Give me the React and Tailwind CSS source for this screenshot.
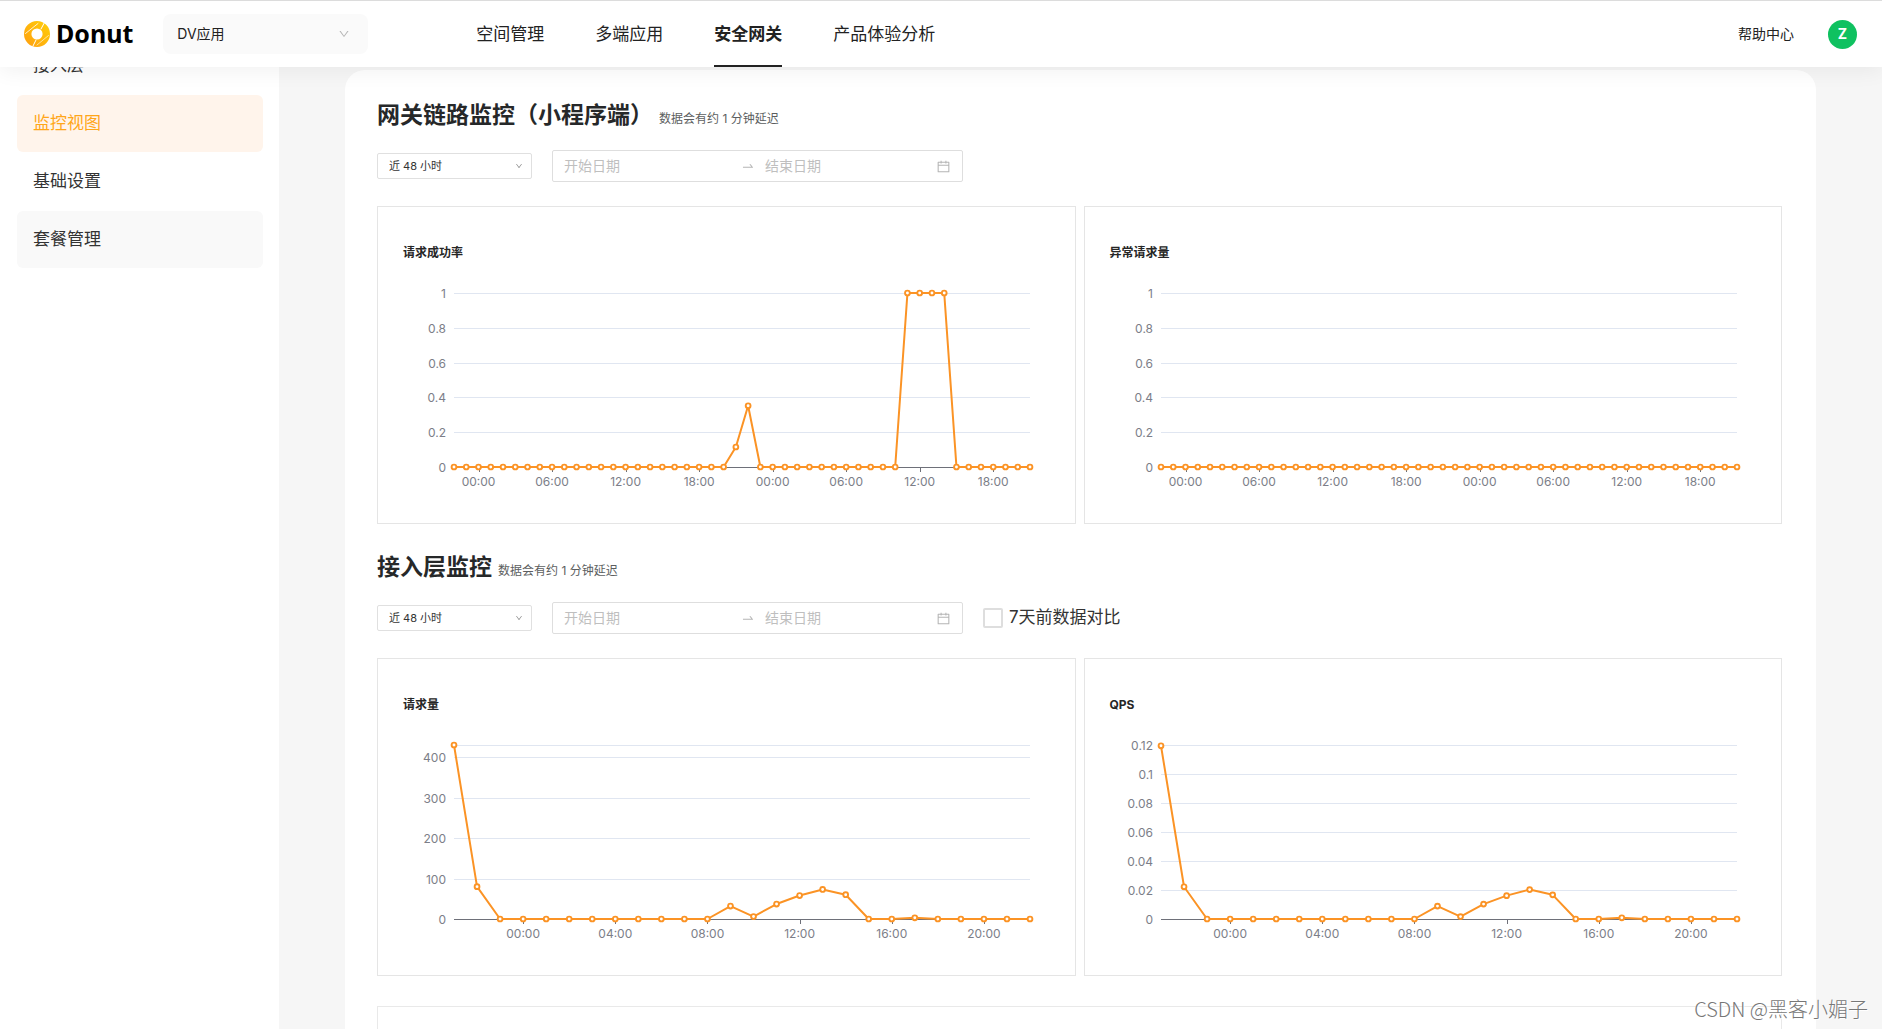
import { useLayoutEffect, useRef, useState } from 'react';
import { AiOutlineCalendar, AiOutlineDown, AiOutlineSwapRight } from 'react-icons/ai';

const NAV_ITEMS = ['空间管理', '多端应用', '安全网关', '产品体验分析'];
const SIDE_ITEMS = ['接入层', '监控视图', '基础设置', '套餐管理'];

const PLOT_TOP = 23;
const PLOT_HEIGHT = 174;
const PLOT_LEFT = 51;
const PLOT_RIGHT = 20;

// Hourly points over the last 48 hours
const successRate = Array(48).fill(0);
successRate[23] = 0.115;
successRate[24] = 0.352;
successRate.fill(1, 37, 41);

const errorCount = Array(48).fill(0);

const requests = [
  430, 80, 0, 0, 0, 0, 0, 0, 0, 0, 0, 0, 32, 6, 37, 58, 73, 60, 0, 0, 3, 0, 0, 0, 0, 0,
];
const qps = requests.map((n) => n / 3600);

const sixHourLabels = ['00:00', '06:00', '12:00', '18:00', '00:00', '06:00', '12:00', '18:00'].map(
  (text, i) => ({ text, index: 2 + i * 6 })
);
const fourHourLabels = ['00:00', '04:00', '08:00', '12:00', '16:00', '20:00'].map((text, i) => ({
  text,
  index: 3 + i * 4,
}));

function LineChart({ title, data, max, ticks, labels, topLine }) {
  const boxRef = useRef(null);
  const [width, setWidth] = useState(0);

  useLayoutEffect(() => {
    const update = () => setWidth(Math.round(boxRef.current.clientWidth));
    update();
    const observer = new ResizeObserver(update);
    observer.observe(boxRef.current);
    return () => observer.disconnect();
  }, []);

  const right = width - PLOT_RIGHT;
  const bottom = PLOT_TOP + PLOT_HEIGHT;
  const x = (i) => PLOT_LEFT + (i * (right - PLOT_LEFT)) / (data.length - 1);
  const y = (v) => bottom - (v / max) * PLOT_HEIGHT;
  const gridLines = topLine ? [...ticks, max] : ticks;

  return (
    <div className="min-w-0 flex-1 border border-[#e5e5e5] px-[25px] pt-9 pb-6">
      <h3 className="text-xs leading-5 font-bold text-[#262626]">{title}</h3>
      <div ref={boxRef} className="mt-[7px] h-[229px] w-full">
        {width > 0 && (
          <svg width={width} height="229" className="block" role="img" aria-label={title}>
            {gridLines.map((v) => (
              <line
                key={v}
                x1={PLOT_LEFT}
                x2={right}
                y1={Math.round(y(v)) + 0.5}
                y2={Math.round(y(v)) + 0.5}
                stroke={v === 0 ? '#6e7079' : '#e0e6f1'}
              />
            ))}
            {ticks.map((v) => (
              <text
                key={v}
                x={PLOT_LEFT - 8}
                y={Math.round(y(v)) + 5}
                textAnchor="end"
                className="fill-[#7c7e88] text-xs"
              >
                {v}
              </text>
            ))}
            {labels.map(({ text, index }) => (
              <g key={index}>
                <line
                  x1={Math.round(x(index)) + 0.5}
                  x2={Math.round(x(index)) + 0.5}
                  y1={bottom}
                  y2={bottom + 5}
                  stroke="#6e7079"
                />
                <text
                  x={x(index)}
                  y={bottom + 19}
                  textAnchor="middle"
                  className="fill-[#7c7e88] text-xs"
                >
                  {text}
                </text>
              </g>
            ))}
            <polyline
              points={data.map((v, i) => `${x(i)},${y(v)}`).join(' ')}
              fill="none"
              stroke="#fb9325"
              strokeWidth="2"
              strokeLinejoin="bevel"
            />
            {data.map((v, i) => (
              <circle
                key={i}
                cx={x(i)}
                cy={y(v)}
                r="2.4"
                fill="#fff"
                stroke="#fb9325"
                strokeWidth="1.9"
              />
            ))}
          </svg>
        )}
      </div>
    </div>
  );
}

function Filters({ children }) {
  return (
    <div className="mt-5 flex h-8 items-center">
      <div className="relative">
        <select
          aria-label="时间范围"
          className="block h-[26px] w-[155px] appearance-none rounded-xs border border-[#e0e0e0] bg-white pl-[11px] text-[11px] text-[#333]"
        >
          <option>近 48 小时</option>
        </select>
        <AiOutlineDown size={8} className="pointer-events-none absolute top-[9px] right-[9px] text-[#888]" />
      </div>
      <div className="ml-5 flex h-8 w-[411px] items-center rounded-xs border border-[#dedede] px-[11px] text-sm">
        <input
          aria-label="开始日期"
          placeholder="开始日期"
          className="w-[177px] placeholder:text-[#bfbfbf] focus:outline-none"
        />
        <AiOutlineSwapRight size={14} className="text-[#b5b5b5]" />
        <input
          aria-label="结束日期"
          placeholder="结束日期"
          className="ml-[10px] min-w-0 flex-1 placeholder:text-[#bfbfbf] focus:outline-none"
        />
        <AiOutlineCalendar size={15} className="text-[#b5b5b5]" />
      </div>
      {children}
    </div>
  );
}

function SectionTitle({ title }) {
  return (
    <div className="flex h-[30px] items-center gap-[6px]">
      <h2 className="text-[23px] leading-7 font-bold text-[#262829]">{title}</h2>
      <span className="pt-2 text-xs text-[#5c5e60]">数据会有约 1 分钟延迟</span>
    </div>
  );
}

function Logo() {
  return (
    <a href="#" className="flex items-center gap-[6px]">
      <svg width="26" height="26" viewBox="0 0 26 26">
        <defs>
          <linearGradient id="ring" x1="0" y1="1" x2="1" y2="0">
            <stop offset="0" stopColor="#ffa50f" />
            <stop offset="1" stopColor="#ffc90a" />
          </linearGradient>
        </defs>
        <circle cx="13" cy="13" r="9.3" fill="none" stroke="url(#ring)" strokeWidth="7.4" />
        <g stroke="#fff" strokeLinecap="round" fill="none">
          <path d="M1.5 12.5 14 2.5" strokeWidth="0.8" />
          <path d="M17 8 20.5 1.5" strokeWidth="1" />
          <path d="M9 25 12 19" strokeWidth="1" />
          <path d="M13 24 24.5 14.5" strokeWidth="0.6" />
        </g>
      </svg>
      <span className="font-['Noto_Sans','Noto_Sans_CJK_SC',sans-serif] text-[25px] font-bold text-black">Donut</span>
    </a>
  );
}

function Header() {
  return (
    <header className="relative z-10 flex h-[67px] shrink-0 items-center border-t border-[#dcdcdc] bg-white pr-[25px] pl-6 shadow-[0_4px_20px_rgba(0,0,0,0.06)]">
      <Logo />
      <div className="relative ml-[30px]">
        <select
          aria-label="应用"
          className="block h-10 w-[205px] appearance-none rounded-lg bg-[#fafafa] pl-[14px] text-sm text-[#222]"
        >
          <option>DV应用</option>
        </select>
        <AiOutlineDown size={12} className="pointer-events-none absolute top-[14px] right-[18px] text-[#b5b5b5]" />
      </div>
      <nav className="ml-[108px] flex h-full gap-[51px]">
        {NAV_ITEMS.map((item) => (
          <a
            key={item}
            href="#"
            className={`flex items-center border-b-2 pt-1 text-[17px] text-[#222] ${
              item === '安全网关' ? 'border-[#222] font-bold' : 'border-transparent'
            }`}
          >
            {item}
          </a>
        ))}
      </nav>
      <a href="#" className="ml-auto text-sm text-[#222]">
        帮助中心
      </a>
      <button className="ml-[34px] h-[29px] w-[29px] rounded-full bg-[#0fc160] text-sm font-bold text-white">
        Z
      </button>
    </header>
  );
}

function Sidebar() {
  const styles = {
    监控视图: 'bg-[#fff4eb] text-[#ffa61a]',
    套餐管理: 'bg-[#f9f9f9] text-[#333]',
  };
  return (
    <aside className="w-[279px] shrink-0 bg-white pr-4 pl-[17px]">
      <nav className="-mt-[30px] flex flex-col gap-px">
        {SIDE_ITEMS.map((item) => (
          <a
            key={item}
            href="#"
            className={`flex h-[57px] items-center rounded-md px-4 text-[17px] ${styles[item] || 'text-[#333]'}`}
          >
            {item}
          </a>
        ))}
      </nav>
    </aside>
  );
}

export default function App() {
  const rateTicks = [0, 0.2, 0.4, 0.6, 0.8, 1];

  return (
    <div className="relative flex h-screen flex-col overflow-hidden bg-[#f6f6f6] font-[Inter,'Noto_Sans_CJK_SC',sans-serif]">
      <Header />
      <div className="flex min-h-0 flex-1">
        <Sidebar />
        <main className="min-w-0 flex-1 px-[66px] pt-[3px]">
          <div className="rounded-t-[20px] bg-white pt-[30px] pr-[34px] pl-8">
            <section>
              <SectionTitle title="网关链路监控（小程序端）" />
              <Filters />
              <div className="mt-6 flex gap-2">
                <LineChart title="请求成功率" data={successRate} max={1} ticks={rateTicks} labels={sixHourLabels} />
                <LineChart title="异常请求量" data={errorCount} max={1} ticks={rateTicks} labels={sixHourLabels} />
              </div>
            </section>

            <section className="mt-7">
              <SectionTitle title="接入层监控" />
              <Filters>
                <label className="ml-5 flex items-center gap-[6px] text-[17px] text-[#333]">
                  <input
                    type="checkbox"
                    className="h-5 w-5 appearance-none rounded-xs border-2 border-[#dedede] bg-white"
                  />
                  7天前数据对比
                </label>
              </Filters>
              <div className="mt-6 flex gap-2">
                <LineChart
                  title="请求量"
                  data={requests}
                  max={430}
                  ticks={[0, 100, 200, 300, 400]}
                  labels={fourHourLabels}
                  topLine
                />
                <LineChart
                  title="QPS"
                  data={qps}
                  max={0.12}
                  ticks={[0, 0.02, 0.04, 0.06, 0.08, 0.1, 0.12]}
                  labels={fourHourLabels}
                />
              </div>
              <div className="mt-[30px] h-80 border border-[#e9e9e9]" />
            </section>
          </div>
        </main>
      </div>
      <div className="absolute right-[14px] bottom-[6px] z-20 font-['Noto_Sans_CJK_SC',sans-serif] text-xl leading-7 font-light text-[#777] [text-shadow:1px_1px_0_#fff]">
        CSDN @黑客小媚子
      </div>
    </div>
  );
}
